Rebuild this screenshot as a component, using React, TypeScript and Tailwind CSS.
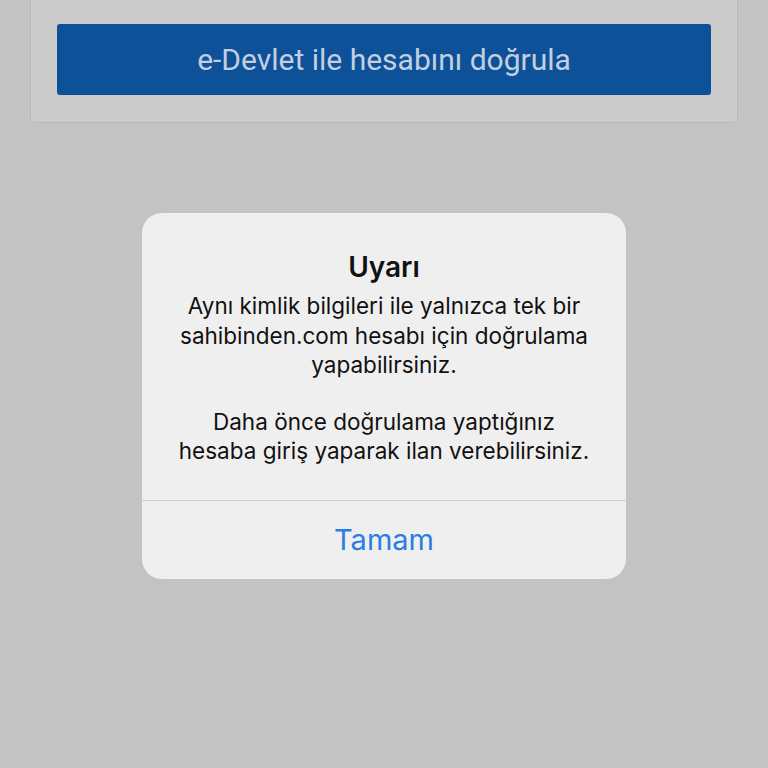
export default function App() {
  return (
    <div className="w-full h-[768px] bg-[#c3c3c3] overflow-hidden flex flex-col items-center" style={{ fontFamily: 'Inter, "Noto Sans", sans-serif' }}>
      <div className="w-[708px] h-[123px] bg-[#cbcbcb] border border-t-0 border-[#b9b9b9] rounded-b-[5px] pt-[24px] px-[26px] shrink-0">
        <button
          className="w-full h-[71px] bg-[#0d5199] rounded-[3px] text-[#c3cfe0] text-[30px] flex items-center justify-center"
          style={{ fontFamily: 'Roboto, "Liberation Sans", sans-serif' }}
        >
          e-Devlet ile hesabını doğrula
        </button>
      </div>

      <div className="mt-[90px] w-[484px] bg-[#efefef] rounded-[20px] flex flex-col shrink-0">
        <div className="pt-[37px] pb-[34px] px-[12px] text-center text-[#111]">
          <h1 className="text-[28px] font-semibold leading-[34px]">Uyarı</h1>
          <p className="mt-[7px] text-[22.5px] leading-[29.5px]">
            Aynı kimlik bilgileri ile yalnızca tek bir sahibinden.com hesabı için doğrulama yapabilirsiniz.
          </p>
          <p className="mt-[27px] text-[22.5px] leading-[29.5px]">
            Daha önce doğrulama yaptığınız
            <br />
            hesaba giriş yaparak ilan verebilirsiniz.
          </p>
        </div>
        <div className="h-px bg-[#cfcfcf]" />
        <button className="h-[78px] text-[29px] text-[#2a7de8] flex items-center justify-center">
          Tamam
        </button>
      </div>
    </div>
  );
}
